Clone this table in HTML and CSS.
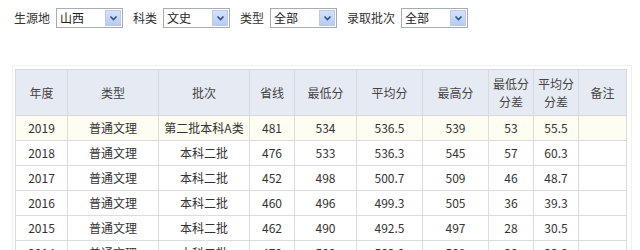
FILE: index.html
```html
<!DOCTYPE html>
<html lang="zh-CN">
<head>
<meta charset="utf-8">
<title>历年分数线</title>
<link rel="stylesheet" href="styles.css">
</head>
<body>
<div class="filters">
  <div class="group">
    <span class="label">生源地</span>
    <div class="select"><span class="val">山西</span><span class="arrow"><svg width="9" height="6" viewBox="0 0 9 6"><path d="M1.5 1.5 L4.5 4.5 L7.5 1.5" fill="none" stroke="#2d4f8e" stroke-width="1.6"/></svg></span></div>
  </div>
  <div class="group">
    <span class="label">科类</span>
    <div class="select"><span class="val">文史</span><span class="arrow"><svg width="9" height="6" viewBox="0 0 9 6"><path d="M1.5 1.5 L4.5 4.5 L7.5 1.5" fill="none" stroke="#2d4f8e" stroke-width="1.6"/></svg></span></div>
  </div>
  <div class="group">
    <span class="label">类型</span>
    <div class="select"><span class="val">全部</span><span class="arrow"><svg width="9" height="6" viewBox="0 0 9 6"><path d="M1.5 1.5 L4.5 4.5 L7.5 1.5" fill="none" stroke="#2d4f8e" stroke-width="1.6"/></svg></span></div>
  </div>
  <div class="group">
    <span class="label">录取批次</span>
    <div class="select"><span class="val">全部</span><span class="arrow"><svg width="9" height="6" viewBox="0 0 9 6"><path d="M1.5 1.5 L4.5 4.5 L7.5 1.5" fill="none" stroke="#2d4f8e" stroke-width="1.6"/></svg></span></div>
  </div>
</div>
<div class="wrap">
<table class="scores">
  <colgroup>
    <col class="c1"><col class="c2"><col class="c3"><col class="c4"><col class="c5"><col class="c6"><col class="c7"><col class="c8"><col class="c9"><col class="c10">
  </colgroup>
  <thead>
    <tr><th>年度</th><th>类型</th><th>批次</th><th>省线</th><th>最低分</th><th>平均分</th><th>最高分</th><th>最低分<br>分差</th><th>平均分<br>分差</th><th>备注</th></tr>
  </thead>
  <tbody>
    <tr class="hl"><td>2019</td><td>普通文理</td><td>第二批本科A类</td><td>481</td><td>534</td><td>536.5</td><td>539</td><td>53</td><td>55.5</td><td></td></tr>
    <tr><td>2018</td><td>普通文理</td><td>本科二批</td><td>476</td><td>533</td><td>536.3</td><td>545</td><td>57</td><td>60.3</td><td></td></tr>
    <tr><td>2017</td><td>普通文理</td><td>本科二批</td><td>452</td><td>498</td><td>500.7</td><td>509</td><td>46</td><td>48.7</td><td></td></tr>
    <tr><td>2016</td><td>普通文理</td><td>本科二批</td><td>460</td><td>496</td><td>499.3</td><td>505</td><td>36</td><td>39.3</td><td></td></tr>
    <tr><td>2015</td><td>普通文理</td><td>本科二批</td><td>462</td><td>490</td><td>492.5</td><td>497</td><td>28</td><td>30.5</td><td></td></tr>
    <tr><td>2014</td><td>普通文理</td><td>本科二批</td><td>470</td><td>500</td><td>503.0</td><td>508</td><td>30</td><td>33.0</td><td></td></tr>
  </tbody>
</table>
</div>
</body>
</html>
```
FILE: styles.css
```css
html, body {
  margin: 0;
  padding: 0;
  background: #fff;
}
body {
  font-family: "Noto Sans CJK SC", "Noto Sans", "DejaVu Sans", sans-serif;
  font-size: 12px;
  color: #333;
  width: 640px;
  height: 250px;
  overflow: hidden;
}
.filters {
  display: flex;
  align-items: center;
  gap: 10px;
  padding: 8px 0 0 14px;
  height: 20px;
}
.group {
  display: flex;
  align-items: center;
  gap: 6px;
}
.label {
  color: #333;
  line-height: 20px;
}
.select {
  box-sizing: border-box;
  width: 67px;
  height: 20px;
  border: 1px solid #a7acb4;
  display: flex;
  align-items: stretch;
  background: #fff;
}
.val {
  flex: 1;
  padding-left: 3px;
  line-height: 18px;
  color: #222;
}
.arrow {
  width: 16px;
  margin: 1px;
  background: linear-gradient(#d5e1fb, #b8cbf3);
  border: 1px solid #bccbe6;
  box-sizing: border-box;
  display: flex;
  align-items: center;
  justify-content: center;
}
.wrap {
  margin: 37px 0 0 12px;
  width: 614px;
  border: 1px solid #f0f0f0;
  border-bottom: none;
  padding: 3px 2px 0 2px;
}
.scores {
  border-collapse: collapse;
  table-layout: fixed;
  width: 612px;
}
.c1 { width: 52px; }
.c2 { width: 91px; }
.c3 { width: 91px; }
.c4 { width: 45px; }
.c5 { width: 62px; }
.c6 { width: 66px; }
.c7 { width: 66px; }
.c8 { width: 45px; }
.c9 { width: 45px; }
.c10 { width: 48px; }
.scores th, .scores td {
  border: 1px solid #dcdcdc;
  text-align: center;
  padding: 0;
  white-space: nowrap;
}
.scores th {
  background: #e6ebf3;
  font-weight: normal;
  color: #444;
  height: 45px;
  line-height: 18px;
  border-color: #d6dae0;
}
.scores td {
  height: 24px;
  line-height: 24px;
  color: #333;
}
.scores tr.hl td {
  background: #fdfdf1;
}
```
